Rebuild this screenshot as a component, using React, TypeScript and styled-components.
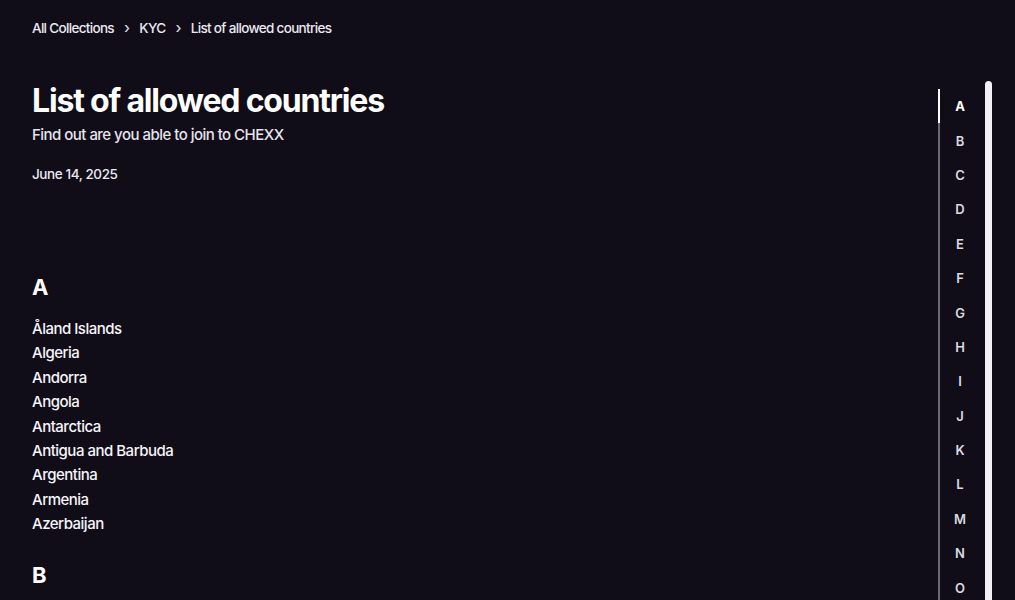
import styled, { createGlobalStyle } from 'styled-components';

const GlobalStyle = createGlobalStyle`
  html, body {
    margin: 0;
    padding: 0;
    height: 100%;
    overflow: hidden;
    background: #100d19;
  }
  body {
    font-family: Inter, "Noto Sans", sans-serif;
    color: #f5f3f8;
  }
  * { box-sizing: border-box; }
`;

const sections: { letter: string; countries: string[] }[] = [
  {
    letter: 'A',
    countries: [
      'Åland Islands',
      'Algeria',
      'Andorra',
      'Angola',
      'Antarctica',
      'Antigua and Barbuda',
      'Argentina',
      'Armenia',
      'Azerbaijan',
    ],
  },
  {
    letter: 'B',
    countries: ['Bahamas', 'Bahrain', 'Bangladesh', 'Barbados', 'Belize', 'Benin'],
  },
];

const letters = 'ABCDEFGHIJKLMNO'.split('');

export default function App() {
  return (
    <>
      <GlobalStyle />
      <Page>
        <Main>
          <Breadcrumbs>
            <Crumb>All Collections</Crumb>
            <Chevron>›</Chevron>
            <Crumb>KYC</Crumb>
            <Chevron>›</Chevron>
            <Crumb>List of allowed countries</Crumb>
          </Breadcrumbs>
          <Title>List of allowed countries</Title>
          <Subtitle>Find out are you able to join to CHEXX</Subtitle>
          <DateLine>June 14, 2025</DateLine>
          {sections.map((s) => (
            <Section key={s.letter}>
              <SectionHeading>{s.letter}</SectionHeading>
              <CountryList>
                {s.countries.map((c) => (
                  <Country key={c}>{c}</Country>
                ))}
              </CountryList>
            </Section>
          ))}
        </Main>
        <Aside>
          <IndexList>
            {letters.map((l) => (
              <IndexItem key={l} $active={l === 'A'}>
                {l}
              </IndexItem>
            ))}
          </IndexList>
          <ScrollThumb />
        </Aside>
      </Page>
    </>
  );
}

const Page = styled.div`
  display: flex;
  height: 100vh;
  overflow: hidden;
`;

const Main = styled.main`
  flex: 1;
  padding: 19px 32px 0;
  letter-spacing: -0.03em;
`;

const Breadcrumbs = styled.nav`
  display: flex;
  align-items: center;
  gap: 8px;
  font-size: 13.5px;
  font-weight: 500;
  line-height: 18px;
  letter-spacing: -0.05em;
  color: #ebe9f0;
`;

const Crumb = styled.span``;

const Chevron = styled.span`
  font-size: 15px;
  color: #d8d6de;
  padding: 0 2px;
`;

const Title = styled.h1`
  margin: 44px 0 0;
  font-size: 32px;
  font-weight: 700;
  line-height: 40px;
  letter-spacing: -0.037em;
  color: #ffffff;
`;

const Subtitle = styled.p`
  margin: 2px 0 0;
  font-size: 15px;
  font-weight: 500;
  line-height: 24px;
  letter-spacing: -0.035em;
  color: #e6e4ec;
`;

const DateLine = styled.div`
  margin-top: 17px;
  font-size: 13.5px;
  font-weight: 500;
  line-height: 20px;
  letter-spacing: -0.03em;
  color: #ebe9f0;
`;

const Section = styled.section`
  margin-top: 89px;

  & + & {
    margin-top: 24px;
  }
`;

const SectionHeading = styled.h2`
  margin: 0 0 16px;
  font-size: 22px;
  font-weight: 700;
  line-height: 28px;
  color: #ffffff;
`;

const CountryList = styled.ul`
  list-style: none;
  margin: 0;
  padding: 0;
`;

const Country = styled.li`
  font-size: 15px;
  font-weight: 500;
  line-height: 24.4px;
  letter-spacing: -0.033em;
  color: #f7f5fa;
`;

const Aside = styled.aside`
  display: flex;
  align-items: flex-start;
  padding-top: 81px;
  padding-right: 23px;
`;

const IndexList = styled.ul`
  list-style: none;
  margin: 8px 0 0;
  padding: 0 4px 0 0;
  border-left: 2px solid #6b6975;
  width: 46px;
`;

const IndexItem = styled.li<{ $active: boolean }>`
  height: 34.4px;
  display: flex;
  align-items: center;
  justify-content: center;
  font-size: 13px;
  font-weight: ${(p) => (p.$active ? 700 : 600)};
  color: ${(p) => (p.$active ? '#ffffff' : '#dcdae2')};
  margin-left: -2px;
  border-left: 2px solid ${(p) => (p.$active ? '#ffffff' : 'transparent')};
`;

const ScrollThumb = styled.div`
  width: 7px;
  height: 600px;
  margin-left: 1px;
  border-radius: 4px 4px 0 0;
  background: #f3f1f6;
`;
